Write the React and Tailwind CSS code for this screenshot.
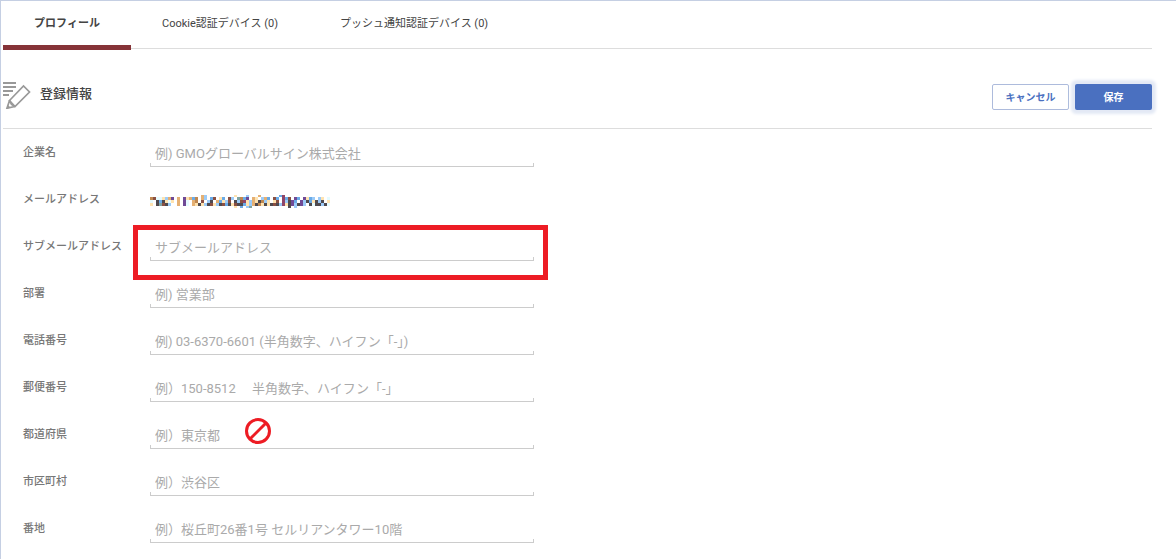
import { useState } from "react";

const TABS = ["プロフィール", "Cookie認証デバイス (0)", "プッシュ通知認証デバイス (0)"];

const FIELDS = [
  { id: "company", label: "企業名", placeholder: "例) GMOグローバルサイン株式会社" },
  { id: "email", label: "メールアドレス", masked: true },
  { id: "sub-email", label: "サブメールアドレス", placeholder: "サブメールアドレス", highlighted: true },
  { id: "department", label: "部署", placeholder: "例) 営業部" },
  { id: "phone", label: "電話番号", placeholder: "例) 03-6370-6601 (半角数字、ハイフン「-」)" },
  { id: "zip", label: "郵便番号", placeholder: "例）150-8512　 半角数字、ハイフン「-」" },
  { id: "prefecture", label: "都道府県", placeholder: "例）東京都", forbidden: true },
  { id: "city", label: "市区町村", placeholder: "例）渋谷区" },
  { id: "street", label: "番地", placeholder: "例）桜丘町26番1号 セルリアンタワー10階" },
];

// One letter per mosaic cell, "." is an empty cell
const MOSAIC_COLORS = {
  o: "#e5b073",
  n: "#c08850",
  b: "#9ccbf8",
  s: "#6aabe8",
  k: "#4f4a4f",
  r: "#8a5043",
  p: "#6f4a96",
  y: "#ffe3b0",
  c: "#e6fbff",
  m: "#8f4568",
  g: "#7fa3a0",
};

const MOSAIC = [
  ".................ob.........y...b...o......sm...............",
  "nrccybop.o.pyosn.ob.sr.ys.rb.gnsp.oy.bos.rs.msr.ps.pysb.by.c",
  "c.kskycy.o.pc.on.r.bk.osybr.kbrmyboyknby.yr.mbkps.pbksykbk.y",
  "y.kgrkb..o.pc.oykybkrybkrskyrkksyboknykykrkbmykpbkpb.kckkbkc",
  "............................y.s.bg............k.b..........."
];

function Mosaic() {
  return (
    <svg width="180" height="13" viewBox="0 0 60 13" preserveAspectRatio="none" shapeRendering="crispEdges" aria-hidden="true">
      {MOSAIC.map((row, y) =>
        [...row].map((cell, x) =>
          cell === "." ? null : (
            <rect key={`${x}-${y}`} x={x} y={y * 3 - 1} width="1" height="3" fill={MOSAIC_COLORS[cell]} />
          )
        )
      )}
    </svg>
  );
}

function EditIcon() {
  return (
    <svg className="w-7 h-7 shrink-0" viewBox="0 0 28 28" fill="none" stroke="#999" aria-hidden="true">
      <path d="M0 2h13M0 6h13M0 10h10M0 14h6" strokeWidth="2" />
      <path d="M6.500 19.500L20.500 5l6 6L12 25.500z" strokeWidth="1.700" />
      <path d="M6.500 19.500L4 27.200L12 25.500M6.500 19.500l2 4 3.500 2" strokeWidth="1.700" />
      <path d="M3.500 27.700l1.200-4 3 3z" fill="#999" stroke="none" />
    </svg>
  );
}

function Field({ field }) {
  return (
    <div className="flex h-[47px]">
      <label htmlFor={field.id} className="w-[127px] shrink-0 pt-[13px] text-[11px] leading-[22px] font-medium text-[#777]">
        {field.label}
      </label>
      {field.masked ? (
        <output id={field.id} className="pt-[19px]">
          <Mosaic />
        </output>
      ) : (
        <div className="relative w-96 pt-[14px]">
          <input
            id={field.id}
            type="text"
            placeholder={field.placeholder}
            className="block h-5 w-full px-[5px] text-[13px] text-[#555] placeholder:text-[#aaa] outline-none"
          />
          <div className="h-1 border border-t-0 border-[#ccc]" />
          {field.highlighted && (
            <div className="pointer-events-none absolute -left-[17px] -right-[14px] top-0.5 h-[55px] border-5 border-[#ed1c24]" />
          )}
          {field.forbidden && (
            <svg className="absolute left-[94px] top-[6px] size-7" viewBox="0 0 28 28" fill="none" stroke="#ed1c24" strokeWidth="3" aria-hidden="true">
              <circle cx="14" cy="14" r="11.500" />
              <path d="M6 22L22 6" />
            </svg>
          )}
        </div>
      )}
    </div>
  );
}

export default function App() {
  const [activeTab, setActiveTab] = useState(0);

  return (
    <div className="min-h-screen border-t border-l border-[#c5cfe3] bg-white pl-0.5 pr-6 font-['Roboto','Noto_Sans_CJK_JP',sans-serif] text-[#444]">
      <nav className="flex h-12 border-b border-[#ddd] text-[11px]">
        {TABS.map((tab, i) => (
          <button
            key={tab}
            type="button"
            onClick={() => setActiveTab(i)}
            className={
              i === activeTab
                ? "-mb-0.5 h-[49px] w-32 border-b-5 border-[#863338] pt-0.5 font-bold"
                : "h-[46px] px-[31px]"
            }
          >
            {tab}
          </button>
        ))}
      </nav>

      <header className="mt-8 flex h-12 items-start border-b border-[#ddd]">
        <EditIcon />
        <h1 className="ml-[9px] pt-[3px] text-[13px] leading-5 font-medium">登録情報</h1>
        <div className="ml-auto flex gap-1.5 pt-[3px] text-[10px] font-bold">
          <button type="button" className="h-[26px] w-[77px] rounded-xs border border-[#adbbdc] text-[#4a70c0]">
            キャンセル
          </button>
          <button type="button" className="h-[26px] w-[77px] rounded-xs bg-[#4a70c0] text-white shadow-[0_0_3px_4px_#e3e9f5]">
            保存
          </button>
        </div>
      </header>

      <form className="pl-5">
        {FIELDS.map((field) => (
          <Field key={field.id} field={field} />
        ))}
      </form>
    </div>
  );
}
